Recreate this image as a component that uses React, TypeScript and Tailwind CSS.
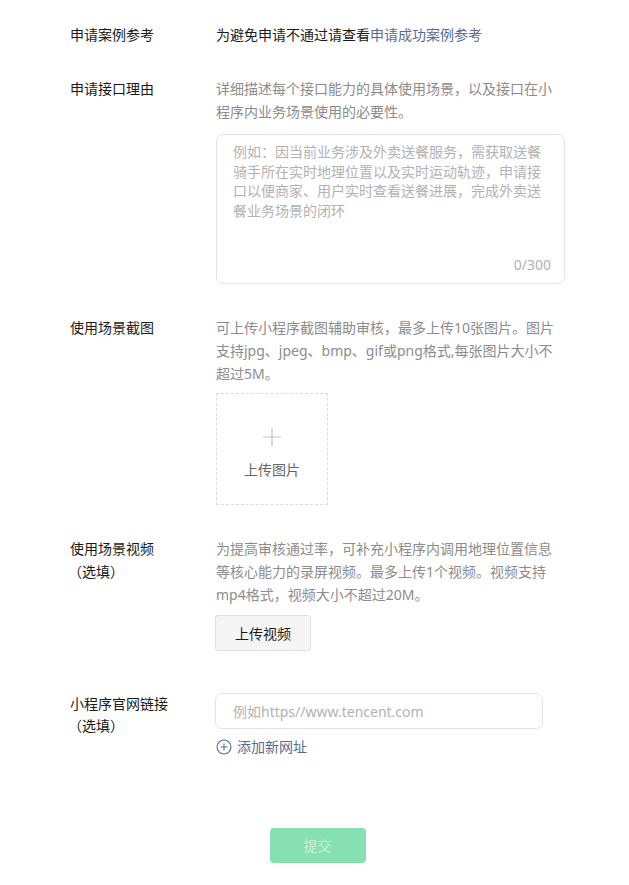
import { useState } from 'react';

const font = "font-['Noto_Sans','Noto_Sans_CJK_SC',sans-serif]";

function Row({ label, children, className = '' }: { label: React.ReactNode; children: React.ReactNode; className?: string }) {
    return (
        <div className={`flex ${className}`}>
            <div className="w-[146px] shrink-0 text-[14px] leading-[23px] text-[#1a1a1a]">{label}</div>
            <div className="w-[349px]">{children}</div>
        </div>
    );
}

export default function App() {
    const [reason, setReason] = useState('');

    return (
        <div className={`${font} min-h-[885px] bg-white pl-[70px] pt-[23px]`}>
            <div className="w-[495px]">
                {/* Case reference */}
                <Row label="申请案例参考">
                    <p className="text-[14px] leading-[23px] text-[#1a1a1a]">
                        为避免申请不通过请查看<span className="text-[#576b95]">申请成功案例参考</span>
                    </p>
                </Row>

                {/* Reason */}
                <Row label="申请接口理由" className="mt-[31px]">
                    <p className="text-[14px] leading-[23px] text-[#8c8c8c]">
                        详细描述每个接口能力的具体使用场景，以及接口在小程序内业务场景使用的必要性。
                    </p>
                    <div className="relative mt-[11px] h-[150px] w-[349px] rounded-[7px] border border-[#e5e5e5]">
                        <textarea
                            value={reason}
                            onChange={(e) => setReason(e.target.value.slice(0, 300))}
                            placeholder="例如：因当前业务涉及外卖送餐服务，需获取送餐骑手所在实时地理位置以及实时运动轨迹，申请接口以便商家、用户实时查看送餐进展，完成外卖送餐业务场景的闭环"
                            className="h-[110px] w-full resize-none bg-transparent px-[16px] pt-[7px] text-[14px] leading-[19.5px] text-[#1a1a1a] outline-none placeholder:text-[#b2b2b2]"
                        />
                        <span className="absolute bottom-[8px] right-[13px] text-[14px] leading-[20px] text-[#b2b2b2]">
                            {reason.length}/300
                        </span>
                    </div>
                </Row>

                {/* Screenshots */}
                <Row label="使用场景截图" className="mt-[32px]">
                    <p className="text-[14px] leading-[23px] text-[#8c8c8c]">
                        可上传小程序截图辅助审核，最多上传10张图片。图片支持jpg、jpeg、bmp、gif或png格式,每张图片大小不超过5M。
                    </p>
                    <button className="mt-[8px] flex h-[112px] w-[112px] flex-col items-center border border-dashed border-[#dcdcdc] pt-[34px]">
                        <svg width="18" height="18" viewBox="0 0 18 18" className="text-[#c2c2c2]">
                            <path d="M9 0v18M0 9h18" stroke="currentColor" strokeWidth="1.2" />
                        </svg>
                        <span className="mt-[14px] text-[14px] leading-[20px] text-[#666666]">上传图片</span>
                    </button>
                </Row>

                {/* Video */}
                <Row
                    label={
                        <>
                            使用场景视频
                            <br />
                            <span className="-ml-[2px]">（选填）</span>
                        </>
                    }
                    className="mt-[32px]"
                >
                    <p className="text-[14px] leading-[23px] text-[#8c8c8c]">
                        为提高审核通过率，可补充小程序内调用地理位置信息等核心能力的录屏视频。最多上传1个视频。视频支持mp4格式，视频大小不超过20M。
                    </p>
                    <button className="-ml-px mt-[9px] h-[36px] w-[96px] rounded-[3px] border border-[#e0e0e0] bg-[#f5f5f5] text-[14px] text-[#1a1a1a]">
                        上传视频
                    </button>
                </Row>

                {/* Website */}
                <Row
                    label={
                        <div className="leading-[22px]">
                            小程序官网链接
                            <br />
                            <span className="-ml-[2px]">（选填）</span>
                        </div>
                    }
                    className="mt-[42px]"
                >
                    <input
                        placeholder="例如https//www.tencent.com"
                        className="-ml-px h-[36px] w-[328px] rounded-[7px] border border-[#e5e5e5] px-[17px] text-[14px] text-[#1a1a1a] outline-none placeholder:text-[#b2b2b2]"
                    />
                    <button className="mt-[8px] flex items-center gap-[5px] text-[14px] leading-[20px] text-[#576b95]">
                        <svg width="16" height="16" viewBox="0 0 16 16">
                            <circle cx="8" cy="8" r="7" fill="none" stroke="currentColor" strokeWidth="1.1" />
                            <path d="M8 4.5v7M4.5 8h7" stroke="currentColor" strokeWidth="1.1" />
                        </svg>
                        添加新网址
                    </button>
                </Row>

                {/* Submit */}
                <div className="mt-[71px] flex justify-center">
                    <button disabled className="h-[35px] w-[96px] rounded-[4px] bg-[#86e0b1] text-[14px] text-[#c9f0db]">
                        提交
                    </button>
                </div>
            </div>
        </div>
    );
}
